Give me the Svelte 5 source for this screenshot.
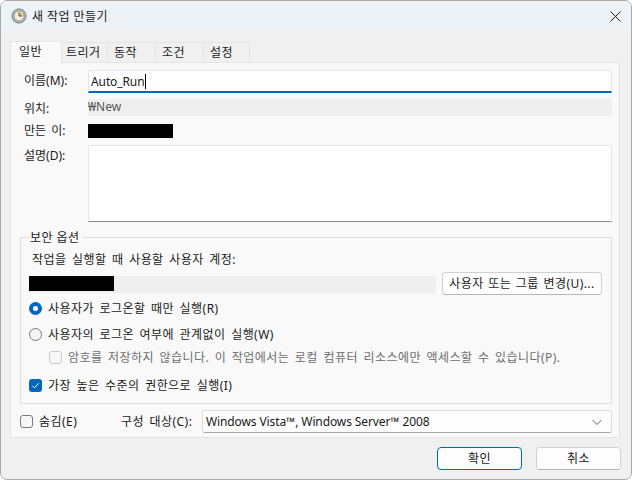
<script lang="ts">
  let name = "Auto_Run";
</script>

<div class="window">
  <header class="titlebar">
    <svg class="clock" width="16" height="16" viewBox="0 0 16 16" aria-hidden="true">
      <circle cx="8" cy="8" r="7" fill="#b9bcbd" stroke="#74787a" />
      <circle cx="8" cy="8" r="5" fill="#f3ecd6" stroke="#9a9d9c" />
      <path d="M8 8V4.5A3.5 3.5 0 0 1 11.5 8z" fill="#eab94a" />
      <path d="M8 4.5V8H11" fill="none" stroke="#555" />
    </svg>
    <span class="title">새 작업 만들기</span>
    <svg class="close" width="11" height="11" viewBox="0 0 11 11" aria-label="닫기">
      <path d="M.5.5l10 10M10.5.5l-10 10" stroke="#1a1a1a" stroke-width="1" />
    </svg>
  </header>

  <div class="body">
    <div class="tabs">
      <span class="tab active">일반</span>
      <span class="tab trigger">트리거</span>
      <span class="tab">동작</span>
      <span class="tab">조건</span>
      <span class="tab last">설정</span>
    </div>

    <section class="panel">
      <div class="form">
        <span class="lbl name-lbl">이름(M):</span>
        <div class="input"><span>{name}</span><i class="caret"></i></div>

        <span class="lbl">위치:</span>
        <div class="readonly">₩New</div>

        <span class="lbl author-lbl">만든 이:</span>
        <div class="author"><i class="redact"></i></div>

        <span class="lbl desc-lbl">설명(D):</span>
        <div class="textarea"></div>
      </div>

      <fieldset class="group">
        <legend>보안 옵션</legend>
        <p class="account-lbl">작업을 실행할 때 사용할 사용자 계정:</p>
        <div class="account">
          <div class="account-field"><i class="redact"></i></div>
          <button class="btn change" type="button">사용자 또는 그룹 변경(U)...</button>
        </div>
        <div class="opt radio-on"><i class="radio on"></i>사용자가 로그온할 때만 실행(R)</div>
        <div class="opt radio-off"><i class="radio"></i>사용자의 로그온 여부에 관계없이 실행(W)</div>
        <div class="opt sub disabled"><i class="check off"></i>암호를 저장하지 않습니다. 이 작업에서는 로컬 컴퓨터 리소스에만 액세스할 수 있습니다(P).</div>
        <div class="opt top"><i class="check on">
          <svg width="13" height="13" viewBox="0 0 13 13"><path d="M3.5 6.8l2 2 4-4.4" fill="none" stroke="#fff" stroke-width="1" /></svg>
        </i>가장 높은 수준의 권한으로 실행(I)</div>
      </fieldset>

      <div class="bottom">
        <div class="opt hidden-opt"><i class="check off dark"></i>숨김(E)</div>
        <span class="config-lbl">구성 대상(C):</span>
        <div class="select">
          <span>Windows Vista™, Windows Server™ 2008</span>
          <svg width="12" height="12" viewBox="0 0 12 12"><path d="M1.5 4l4.5 4.5L10.5 4" fill="none" stroke="#666" /></svg>
        </div>
      </div>
    </section>

    <footer class="actions">
      <button class="btn ok" type="button">확인</button>
      <button class="btn cancel" type="button">취소</button>
    </footer>
  </div>
</div>

<style>
  :global(body) {
    margin: 0;
    background: #fff;
  }

  .window {
    width: 632px;
    height: 480px;
    border: 1px solid #a9a9a9;
    border-radius: 7px;
    box-sizing: border-box;
    background: #f0f0f0;
    overflow: hidden;
    font-family: "Noto Sans", "Noto Sans CJK KR", sans-serif;
    font-size: 12px;
    letter-spacing: 0.45px;
    color: #1a1a1a;
    display: flex;
    flex-direction: column;
  }

  .titlebar {
    height: 30px;
    flex: none;
    display: flex;
    align-items: center;
    padding: 0 10px 0 10px;
    background: #edf2f7;
  }

  .title {
    margin-left: 5px;
    flex: 1;
  }

  .body {
    flex: 1;
    display: flex;
    flex-direction: column;
    padding: 10px 11px 0 9px;
  }

  .tabs {
    display: flex;
    height: 21px;
    position: relative;
    z-index: 1;
    align-items: flex-end;
  }

  .tab {
    height: 20px;
    box-sizing: border-box;
    border: 1px solid #e5e5e5;
    border-bottom: 0;
    border-left: 0;
    background: #f0f0f0;
    line-height: 19px;
    width: 48px;
    padding-left: 6px;
  }

  .tab.trigger {
    width: 46px;
    padding-left: 4px;
  }

  .tab.last {
    width: 46px;
  }

  .tab.active {
    height: 22px;
    width: 52px;
    border-left: 1px solid #e5e5e5;
    background: #f9f9f9;
    margin-bottom: -1px;
    line-height: 20px;
    padding-left: 8px;
  }

  .panel {
    height: 376px;
    box-sizing: border-box;
    border: 1px solid #e5e5e5;
    background: #f9f9f9;
    padding: 7px 7px 0 9px;
    display: flex;
    flex-direction: column;
  }

  .form {
    display: grid;
    grid-template-columns: 68px 1fr;
    grid-template-rows: 23px 16px 15px 77px;
    row-gap: 7px;
    align-items: center;
  }

  .lbl {
    padding-left: 4px;
    line-height: 17px;
    letter-spacing: 0;
  }

  .author-lbl {
    word-spacing: 2px;
  }

  .desc-lbl {
    align-self: start;
    margin-top: 2px;
  }

  .name-lbl {
    margin-top: -3px;
  }

  .input {
    height: 23px;
    box-sizing: border-box;
    background: #fff;
    border: 1px solid #e5e5e5;
    border-bottom: 2px solid #0067c0;
    padding-left: 2px;
    display: flex;
    align-items: center;
    letter-spacing: -0.1px;
  }

  .caret {
    display: inline-block;
    width: 1px;
    height: 15px;
    background: #000;
  }

  .readonly {
    height: 17px;
    margin-top: -1px;
    background: #efefef;
    line-height: 16px;
    color: #555;
    letter-spacing: 0;
  }

  .author {
    height: 14px;
    align-self: end;
  }

  .redact {
    display: block;
    width: 85px;
    height: 14px;
    background: #000;
  }

  .textarea {
    height: 77px;
    box-sizing: border-box;
    background: #fff;
    border: 1px solid #e5e5e5;
    border-bottom-color: #868686;
  }

  .group {
    margin: 7px 0 0;
    padding: 5px 8px 0;
    height: 175px;
    box-sizing: border-box;
    border: 1px solid #dcdcdc;
    min-width: 0;
    word-spacing: 2px;
  }

  legend {
    padding: 0 3px 0 1px;
    margin-left: 0;
    line-height: 17px;
    word-spacing: 0;
  }

  .account-lbl {
    margin: 0 0 0 3px;
    line-height: 17px;
  }

  .account {
    display: flex;
    align-items: flex-start;
    gap: 6px;
    margin-top: 4px;
    height: 23px;
  }

  .account-field {
    width: 407px;
    height: 17px;
    margin-top: 4px;
    background: #efefef;
  }

  .account-field .redact {
    height: 15px;
  }

  .btn {
    box-sizing: border-box;
    background: #fdfdfd;
    border: 1px solid #d0d0d0;
    border-bottom-color: #b5b5b5;
    border-radius: 4px;
    font: inherit;
    letter-spacing: inherit;
    color: #1a1a1a;
    padding: 0 0 2px;
  }

  .change {
    width: 160px;
    height: 23px;
    word-spacing: 1px;
  }

  .opt {
    display: flex;
    align-items: center;
    gap: 6px;
    height: 17px;
    box-sizing: border-box;
    padding-bottom: 2px;
    white-space: nowrap;
  }

  .opt > i {
    margin-top: 2px;
  }

  .radio-on {
    margin-top: 5px;
  }

  .radio-off {
    margin-top: 9px;
  }

  .sub {
    margin: 6px 0 0 20px;
    color: #6d6d6d;
  }

  .top {
    margin-top: 11px;
  }

  .radio {
    width: 13px;
    height: 13px;
    box-sizing: border-box;
    border-radius: 50%;
    border: 1px solid #7a7a7a;
    background: #f5f5f5;
    flex: none;
  }

  .radio.on {
    border: 4px solid #0067c0;
    background: #fff;
  }

  .check {
    width: 13px;
    height: 13px;
    box-sizing: border-box;
    border-radius: 3px;
    flex: none;
    display: block;
  }

  .check.off {
    border: 1px solid #c8c8c8;
    background: #f7f7f7;
  }

  .check.dark {
    border-color: #7a7a7a;
  }

  .check.on {
    background: #0067c0;
  }

  .check svg {
    display: block;
  }

  .bottom {
    display: flex;
    align-items: center;
    margin-top: 6px;
  }

  .hidden-opt {
    width: 101px;
    gap: 6px;
  }

  .config-lbl {
    width: 81px;
    word-spacing: 2px;
    margin-top: -2px;
  }

  .select {
    width: 410px;
    height: 23px;
    box-sizing: border-box;
    background: #fdfdfd;
    border: 1px solid #dcdcdc;
    border-bottom-color: #a8a8a8;
    border-radius: 3px;
    padding: 0 8px 0 3px;
    display: flex;
    align-items: center;
    justify-content: space-between;
    letter-spacing: -0.11px;
  }

  .actions {
    display: flex;
    justify-content: flex-end;
    gap: 14px;
    margin: 9px -1px 0 0;
  }

  .ok,
  .cancel {
    width: 85px;
    height: 23px;
  }

  .ok {
    border: 1px solid #0067c0;
  }
</style>
